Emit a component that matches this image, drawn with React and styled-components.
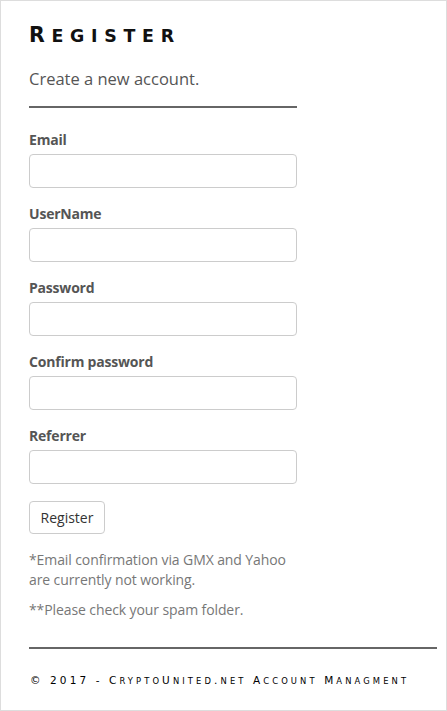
import React from 'react';
import styled, { createGlobalStyle } from 'styled-components';

const GlobalStyle = createGlobalStyle`
  html, body {
    margin: 0;
    padding: 0;
    background: #fff;
  }
  body {
    font-family: 'Open Sans', 'Noto Sans', sans-serif;
    color: #555;
  }
`;

const Page = styled.div`
  box-sizing: border-box;
  height: 711px;
  border: 1px solid #ddd;
  padding: 0 9px 0 28px;
  display: flex;
  flex-direction: column;
`;

const Title = styled.h2`
  margin: 22px 0 0;
  font-family: 'DejaVu Sans', sans-serif;
  font-weight: bold;
  font-size: 20.5px;
  line-height: 24px;
  letter-spacing: 6.7px;
  color: #111;
`;

const Small = styled.span`
  font-size: ${p => p.$ratio || 0.85}em;
`;

const Caps = ({ text, ratio }) => (
  <span>
    {text.split('').map((ch, i) =>
      ch !== ch.toUpperCase() ? (
        <Small key={i} $ratio={ratio}>{ch.toUpperCase()}</Small>
      ) : (
        <React.Fragment key={i}>{ch}</React.Fragment>
      )
    )}
  </span>
);

const Lead = styled.p`
  margin: 20px 0 0;
  font-size: 16.5px;
  line-height: 22px;
  color: #555;
`;

const Rule = styled.hr`
  width: ${p => (p.$full ? '100%' : '268px')};
  margin: ${p => (p.$full ? 'auto 0 0' : '16px 0 22px')};
  border: 0;
  border-top: 2px solid #666;
`;

const Form = styled.form`
  width: 268px;
  display: flex;
  flex-direction: column;
`;

const Group = styled.div`
  display: flex;
  flex-direction: column;
  margin-bottom: 16px;
`;

const Label = styled.label`
  font-size: 14px;
  font-weight: bold;
  line-height: 20px;
  margin-bottom: 4px;
  color: #555;
  letter-spacing: -0.2px;
`;

const Input = styled.input`
  box-sizing: border-box;
  height: 34px;
  width: 100%;
  border: 1px solid #ccc;
  border-radius: 4px;
  padding: 6px 12px;
  font: inherit;
  font-size: 14px;
  background: #fff;
`;

const Button = styled.button`
  align-self: flex-start;
  box-sizing: border-box;
  height: 33px;
  width: 76px;
  margin-top: 1px;
  border: 1px solid #ccc;
  border-radius: 4px;
  background: #fff;
  color: #333;
  font-family: inherit;
  font-size: 14px;
  padding: 0;
`;

const Note = styled.p`
  width: 268px;
  margin: ${p => (p.$first ? '16px' : '10px')} 0 0;
  font-size: 14px;
  line-height: 20px;
  color: #777;
  letter-spacing: -0.1px;
`;

const Footer = styled.footer`
  height: 61px;
  display: flex;
  align-items: center;
  padding-left: 1px;
  font-family: 'DejaVu Sans', sans-serif;
  font-size: 10.5px;
  letter-spacing: 3.1px;
  color: #000;
`;

const fields = ['Email', 'UserName', 'Password', 'Confirm password', 'Referrer'];

export default function App() {
  return (
    <>
      <GlobalStyle />
      <Page>
        <Title>
          <Caps text="Register" />
        </Title>
        <Lead>Create a new account.</Lead>
        <Rule />
        <Form onSubmit={e => e.preventDefault()}>
          {fields.map(f => (
            <Group key={f}>
              <Label>{f}</Label>
              <Input type={f.includes('assword') ? 'password' : 'text'} />
            </Group>
          ))}
          <Button type="submit">Register</Button>
        </Form>
        <Note $first>*Email confirmation via GMX and Yahoo are currently not working.</Note>
        <Note>**Please check your spam folder.</Note>
        <Rule $full />
        <Footer>
          <Caps text="© 2017 - CryptoUnited.net Account Managment" ratio={0.8} />
        </Footer>
      </Page>
    </>
  );
}
